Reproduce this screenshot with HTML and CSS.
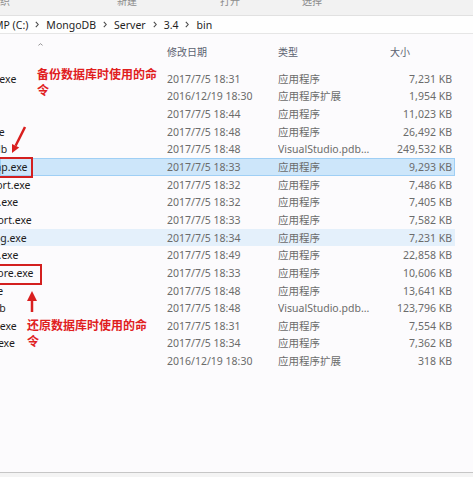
FILE: index.html
```html
<!DOCTYPE html>
<html lang="zh-CN">
<head>
<meta charset="utf-8">
<title>bin</title>
<link rel="stylesheet" href="styles.css">
</head>
<body>
<div class="window">
  <div class="ribbon">
    <span class="group g1">组织</span>
    <span class="group g2">新建</span>
    <span class="group g3">打开</span>
    <span class="group g4">选择</span>
  </div>
  <div class="address">
    <span class="crumb first">MP (C:)</span>
    <svg class="sep" viewBox="0 0 4 7"><path d="M0.8 0.8 L3.2 3.5 L0.8 6.2"/></svg>
    <span class="crumb">MongoDB</span>
    <svg class="sep" viewBox="0 0 4 7"><path d="M0.8 0.8 L3.2 3.5 L0.8 6.2"/></svg>
    <span class="crumb">Server</span>
    <svg class="sep" viewBox="0 0 4 7"><path d="M0.8 0.8 L3.2 3.5 L0.8 6.2"/></svg>
    <span class="crumb">3.4</span>
    <svg class="sep" viewBox="0 0 4 7"><path d="M0.8 0.8 L3.2 3.5 L0.8 6.2"/></svg>
    <span class="crumb">bin</span>
  </div>
  <div class="list">
    <div class="head">
      <span class="h-name"><svg class="caret" viewBox="0 0 6 3"><path d="M0.5 2.6 L3 0.5 L5.5 2.6"/></svg></span>
      <span>修改日期</span>
      <span>类型</span>
      <span>大小</span>
    </div>
    <div class="row"><span class="name">bsondump.exe</span><span>2017/7/5 18:31</span><span>应用程序</span><span class="size">7,231 KB</span></div>
    <div class="row"><span class="name">libeay32.dll</span><span>2016/12/19 18:30</span><span>应用程序扩展</span><span class="size">1,954 KB</span></div>
    <div class="row"><span class="name">mongo.exe</span><span>2017/7/5 18:44</span><span>应用程序</span><span class="size">11,023 KB</span></div>
    <div class="row"><span class="name">mongod.exe</span><span>2017/7/5 18:48</span><span>应用程序</span><span class="size">26,492 KB</span></div>
    <div class="row"><span class="name">mongod.pdb</span><span>2017/7/5 18:48</span><span>VisualStudio.pdb...</span><span class="size">249,532 KB</span></div>
    <div class="row selected"><span class="name">mongodump.exe</span><span>2017/7/5 18:33</span><span>应用程序</span><span class="size">9,293 KB</span></div>
    <div class="row"><span class="name">mongoexport.exe</span><span>2017/7/5 18:32</span><span>应用程序</span><span class="size">7,486 KB</span></div>
    <div class="row"><span class="name">mongofiles.exe</span><span>2017/7/5 18:32</span><span>应用程序</span><span class="size">7,405 KB</span></div>
    <div class="row"><span class="name">mongoimport.exe</span><span>2017/7/5 18:33</span><span>应用程序</span><span class="size">7,582 KB</span></div>
    <div class="row hover"><span class="name">mongooplog.exe</span><span>2017/7/5 18:34</span><span>应用程序</span><span class="size">7,231 KB</span></div>
    <div class="row"><span class="name">mongoperf.exe</span><span>2017/7/5 18:49</span><span>应用程序</span><span class="size">22,858 KB</span></div>
    <div class="row"><span class="name">mongorestore.exe</span><span>2017/7/5 18:33</span><span>应用程序</span><span class="size">10,606 KB</span></div>
    <div class="row"><span class="name">mongos.exe</span><span>2017/7/5 18:48</span><span>应用程序</span><span class="size">13,641 KB</span></div>
    <div class="row"><span class="name">mongos.pdb</span><span>2017/7/5 18:48</span><span>VisualStudio.pdb...</span><span class="size">123,796 KB</span></div>
    <div class="row"><span class="name">mongostat.exe</span><span>2017/7/5 18:31</span><span>应用程序</span><span class="size">7,554 KB</span></div>
    <div class="row"><span class="name">mongotop.exe</span><span>2017/7/5 18:34</span><span>应用程序</span><span class="size">7,362 KB</span></div>
    <div class="row"><span class="name">ssleay32.dll</span><span>2016/12/19 18:30</span><span>应用程序扩展</span><span class="size">318 KB</span></div>
  </div>
  <div class="status"></div>

  <div class="note note-backup">备份数据库时使用的命令</div>
  <div class="mark mark-dump"></div>
  <svg class="arrow arrow-down" viewBox="0 0 25 34"><path class="shaft" d="M20 5 L10.6 23.8"/><polygon points="7,31 14.2,25.6 7,22"/></svg>

  <div class="mark mark-restore"></div>
  <svg class="arrow arrow-up" viewBox="0 0 12 25"><polygon points="6,2 11,12 1,12"/><path class="shaft" d="M6 11 L6 23"/></svg>
  <div class="note note-restore">还原数据库时使用的命令</div>
</div>
</body>
</html>
```

FILE: styles.css
```css
* {
  box-sizing: border-box;
  margin: 0;
  padding: 0;
}

html,
body {
  width: 473px;
  height: 477px;
  overflow: hidden;
}

body {
  font-family: "Noto Sans", "Noto Sans CJK SC", sans-serif;
  background: #fcfbfd;
  color: #1e1e1e;
}

.window {
  position: relative;
  width: 473px;
  height: 477px;
  display: flex;
  flex-direction: column;
  overflow: hidden;
}

/* ribbon group labels, cut at the top */
.ribbon {
  flex: none;
  height: 16px;
  display: flex;
  background: #f2f2f2;
  border-bottom: 1px solid #e1e1e1;
  font-family: "Noto Sans CJK SC", sans-serif;
  font-size: 10px;
  line-height: 10px;
  color: #8c8c8c;
  overflow: hidden;
  white-space: nowrap;
}

.group {
  margin-top: -4px;
}

.g1 { margin-left: -10px; }
.g2 { margin-left: 107px; }
.g3 { margin-left: 83px; }
.g4 { margin-left: 62px; }

/* breadcrumb bar */
.address {
  flex: none;
  height: 18px;
  display: flex;
  align-items: center;
  gap: 7px;
  background: #fefefe;
  border-bottom: 1px solid #e6e6e6;
  font-size: 10.5px;
  line-height: 14px;
  color: #1f1f1f;
  white-space: nowrap;
}

.crumb.first {
  margin-left: -6px;
}

.sep {
  width: 4px;
  height: 7px;
  flex: none;
  fill: none;
  stroke: #4a4a4a;
  stroke-width: 1.1;
}

/* file list */
.list {
  flex: 1;
  min-height: 0;
  display: flex;
  flex-direction: column;
}

.head,
.row {
  display: grid;
  grid-template-columns: 167px 111px 112px 62px;
  align-items: center;
  width: 455px;
  white-space: nowrap;
}

.head {
  height: 36px;
  font-family: "Noto Sans CJK SC", sans-serif;
  font-size: 10px;
  line-height: 12px;
  color: #5b6170;
}

.h-name {
  align-self: start;
  padding-top: 8px;
  padding-left: 38px;
  line-height: 0;
}

.caret {
  width: 5px;
  height: 3px;
  fill: none;
  stroke: #777;
  stroke-width: 0.9;
}

.row {
  flex: none;
  height: 17.65px;
  font-size: 10.5px;
  line-height: 14px;
  color: #6b6b6b;
}

.row > span {
  overflow: hidden;
}

.name {
  color: #1c1c1c;
  text-indent: -57px;
}

.size {
  text-align: right;
}

.row.selected {
  background: #cde6fa;
  box-shadow: inset 0 0 0 1px #9fcff5;
}

.row.hover {
  background: #e4f0fb;
}

.status {
  flex: none;
  height: 5px;
  background: #f4f4f4;
  border-top: 1px solid #c6c6c6;
}

/* red annotations drawn over the list */
.note {
  position: absolute;
  width: 121px;
  font-family: "Noto Sans CJK SC", sans-serif;
  font-weight: 700;
  font-size: 12px;
  line-height: 16px;
  color: #e0201e;
}

.note-backup {
  left: 37px;
  top: 66px;
}

.note-restore {
  left: 27px;
  top: 317px;
}

.mark {
  position: absolute;
  border: 2px solid #d31f1f;
}

.mark-dump {
  left: -5px;
  top: 157px;
  width: 38px;
  height: 21px;
}

.mark-restore {
  left: -5px;
  top: 264px;
  width: 47px;
  height: 21px;
}

.arrow {
  position: absolute;
  fill: #d91f1f;
}

.arrow .shaft {
  fill: none;
  stroke: #d91f1f;
  stroke-width: 2.5;
}

.arrow-down {
  left: 5px;
  top: 122px;
  width: 25px;
  height: 34px;
}

.arrow-up {
  left: 26px;
  top: 289px;
  width: 12px;
  height: 25px;
}
```
